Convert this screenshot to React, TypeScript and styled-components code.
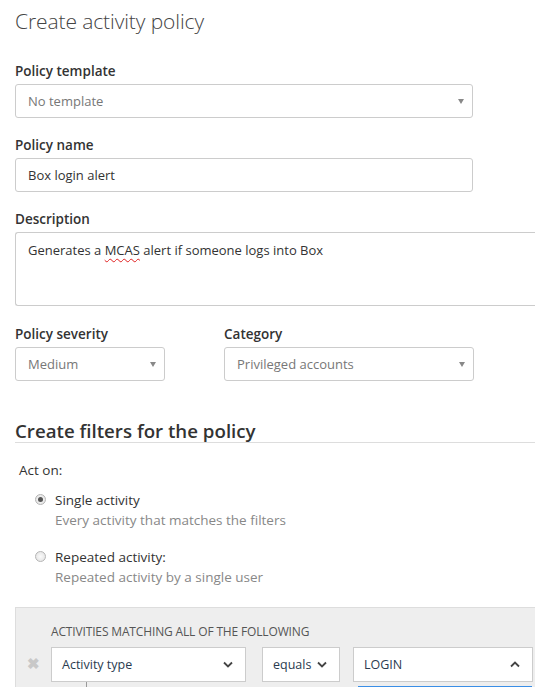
import React from "react";
import styled, { createGlobalStyle } from "styled-components";

const GlobalStyle = createGlobalStyle`
  html, body {
    margin: 0;
    padding: 0;
    background: #fff;
    overflow: hidden;
  }
  body {
    font-family: "Open Sans", "Noto Sans", sans-serif;
    color: #333;
  }
`;

const Page = styled.div`
  width: 535px;
  height: 687px;
  overflow: hidden;
  padding-left: 15px;
  box-sizing: border-box;
`;

const Title = styled.h1`
  margin: 0;
  padding-top: 6px;
  font-size: 21px;
  font-weight: 300;
  color: #444;
  line-height: 30px;
  letter-spacing: -0.1px;
`;

const Field = styled.div<{ $top?: number }>`
  margin-top: ${props => props.$top ?? 18}px;
`;

const Label = styled.div`
  font-size: 13.5px;
  font-weight: 600;
  color: #333;
  line-height: 18px;
  margin-bottom: 4px;
`;

const Box = styled.div<{ $width?: number }>`
  width: ${props => (props.$width ? `${props.$width}px` : "auto")};
  height: 34px;
  box-sizing: border-box;
  border: 1px solid #ccc;
  border-radius: 3px;
  padding: 0 12px;
  display: flex;
  align-items: center;
  justify-content: space-between;
  font-size: 13px;
  color: ${props => (props.color ? props.color : "#777")};
  background: #fff;
`;

const TextArea = styled.div`
  height: 74px;
  margin-right: -10px;
  box-sizing: border-box;
  border: 1px solid #ccc;
  border-right: none;
  border-radius: 3px 0 0 3px;
  padding: 8px 12px;
  font-size: 13px;
  color: #333;
`;

const Squiggle = styled.span`
  text-decoration: underline wavy #e02020;
  text-decoration-thickness: 1px;
  text-underline-offset: 3px;
`;

const Caret = styled.span`
  width: 0;
  height: 0;
  border-left: 3.5px solid transparent;
  border-right: 3.5px solid transparent;
  border-top: 5px solid #888;
  margin-right: -4px;
`;

const Row = styled.div`
  display: flex;
  gap: 59px;
  margin-top: 19px;
`;

const Section = styled.h2`
  margin: 39px 0 0 0;
  font-size: 18.7px;
  font-weight: 600;
  color: #333;
  line-height: 22px;
  padding-bottom: 0;
  border-bottom: 1px solid #ddd;
`;

const ActOn = styled.div`
  margin: 18px 0 0 4px;
  font-size: 13.5px;
  color: #333;
  line-height: 18px;
`;

const Option = styled.div<{ $top: number }>`
  display: flex;
  gap: 9px;
  margin: ${props => props.$top}px 0 0 20px;
`;

const Radio = styled.span<{ $checked?: boolean }>`
  width: 11px;
  height: 11px;
  margin-top: 3px;
  flex: none;
  border-radius: 50%;
  box-sizing: border-box;
  border: 1px solid #b5b5b5;
  background: radial-gradient(circle, #fafafa 0%, #e0e0e0 100%);
  display: flex;
  align-items: center;
  justify-content: center;
  &::after {
    content: "";
    display: ${props => (props.$checked ? "block" : "none")};
    width: 5px;
    height: 5px;
    border-radius: 50%;
    background: #555;
  }
`;

const OptionTitle = styled.div`
  font-size: 13.5px;
  color: #333;
  line-height: 18px;
`;

const OptionHint = styled.div`
  font-size: 13.5px;
  color: #888;
  line-height: 18px;
  margin-top: 2px;
`;

const FilterPanel = styled.div`
  margin-top: 21px;
  margin-right: -10px;
  height: 90px;
  background: #eeeeee;
  border-top: 1px solid #ddd;
  border-left: 1px solid #ddd;
  padding: 16px 0 0 35px;
  box-sizing: border-box;
  position: relative;
`;

const PanelHeading = styled.div`
  font-size: 12px;
  color: #555;
  line-height: 16px;
  letter-spacing: -0.15px;
`;

const FilterRow = styled.div`
  display: flex;
  margin-top: 7px;
  position: relative;
`;

const RemoveMark = styled.span`
  position: absolute;
  left: -24px;
  top: 8px;
  font-size: 15px;
  color: #c8c8c8;
  font-weight: 700;
  line-height: 16px;
`;

const FilterBox = styled.div<{ $width: number; $gap?: number }>`
  width: ${props => props.$width}px;
  height: 35px;
  margin-left: ${props => props.$gap || 0}px;
  box-sizing: border-box;
  background: #fff;
  border: 1px solid #ccc;
  padding: 0 10px;
  display: flex;
  align-items: center;
  justify-content: space-between;
  font-size: 12.5px;
  color: #2a3b50;
  position: relative;
`;

const Chevron = ({ up }: { up?: boolean }) => (
  <svg width="10" height="7" viewBox="0 0 10 7" style={{ marginRight: 2 }}>
    <path
      d={up ? "M1 5.5 L5 1.5 L9 5.5" : "M1 1.5 L5 5.5 L9 1.5"}
      fill="none"
      stroke="#444"
      strokeWidth="1.8"
    />
  </svg>
);

const TreeLine = styled.div`
  position: absolute;
  left: 34px;
  top: 34px;
  width: 1px;
  height: 20px;
  background: #999;
`;

const DropList = styled.div`
  position: absolute;
  left: 4px;
  right: 0;
  top: 38px;
  height: 20px;
  border-top: 2px solid #3a8ee6;
  border-left: 1px solid #3a8ee6;
  background: #fff;
`;

export default function App() {
  return (
    <Page>
      <GlobalStyle />
      <Title>Create activity policy</Title>

      <Field $top={26}>
        <Label>Policy template</Label>
        <Box $width={458}>
          No template
          <Caret />
        </Box>
      </Field>

      <Field>
        <Label>Policy name</Label>
        <Box $width={458} color="#333">
          Box login alert
        </Box>
      </Field>

      <Field>
        <Label>Description</Label>
        <TextArea>
          Generates a <Squiggle>MCAS</Squiggle> alert if someone logs into Box
        </TextArea>
      </Field>

      <Row>
        <div>
          <Label>Policy severity</Label>
          <Box $width={150}>
            Medium
            <Caret />
          </Box>
        </div>
        <div>
          <Label>Category</Label>
          <Box $width={250}>
            Privileged accounts
            <Caret />
          </Box>
        </div>
      </Row>

      <Section>Create filters for the policy</Section>

      <ActOn>Act on:</ActOn>
      <Option $top={12}>
        <Radio $checked />
        <div>
          <OptionTitle>Single activity</OptionTitle>
          <OptionHint>Every activity that matches the filters</OptionHint>
        </div>
      </Option>
      <Option $top={19}>
        <Radio />
        <div>
          <OptionTitle>Repeated activity:</OptionTitle>
          <OptionHint>Repeated activity by a single user</OptionHint>
        </div>
      </Option>

      <FilterPanel>
        <PanelHeading>ACTIVITIES MATCHING ALL OF THE FOLLOWING</PanelHeading>
        <FilterRow>
          <RemoveMark>✖</RemoveMark>
          <FilterBox $width={195}>
            Activity type
            <Chevron />
            <TreeLine />
          </FilterBox>
          <FilterBox $width={78} $gap={16}>
            equals
            <Chevron />
          </FilterBox>
          <FilterBox $width={180} $gap={13}>
            LOGIN
            <Chevron up />
            <DropList />
          </FilterBox>
        </FilterRow>
      </FilterPanel>
    </Page>
  );
}
